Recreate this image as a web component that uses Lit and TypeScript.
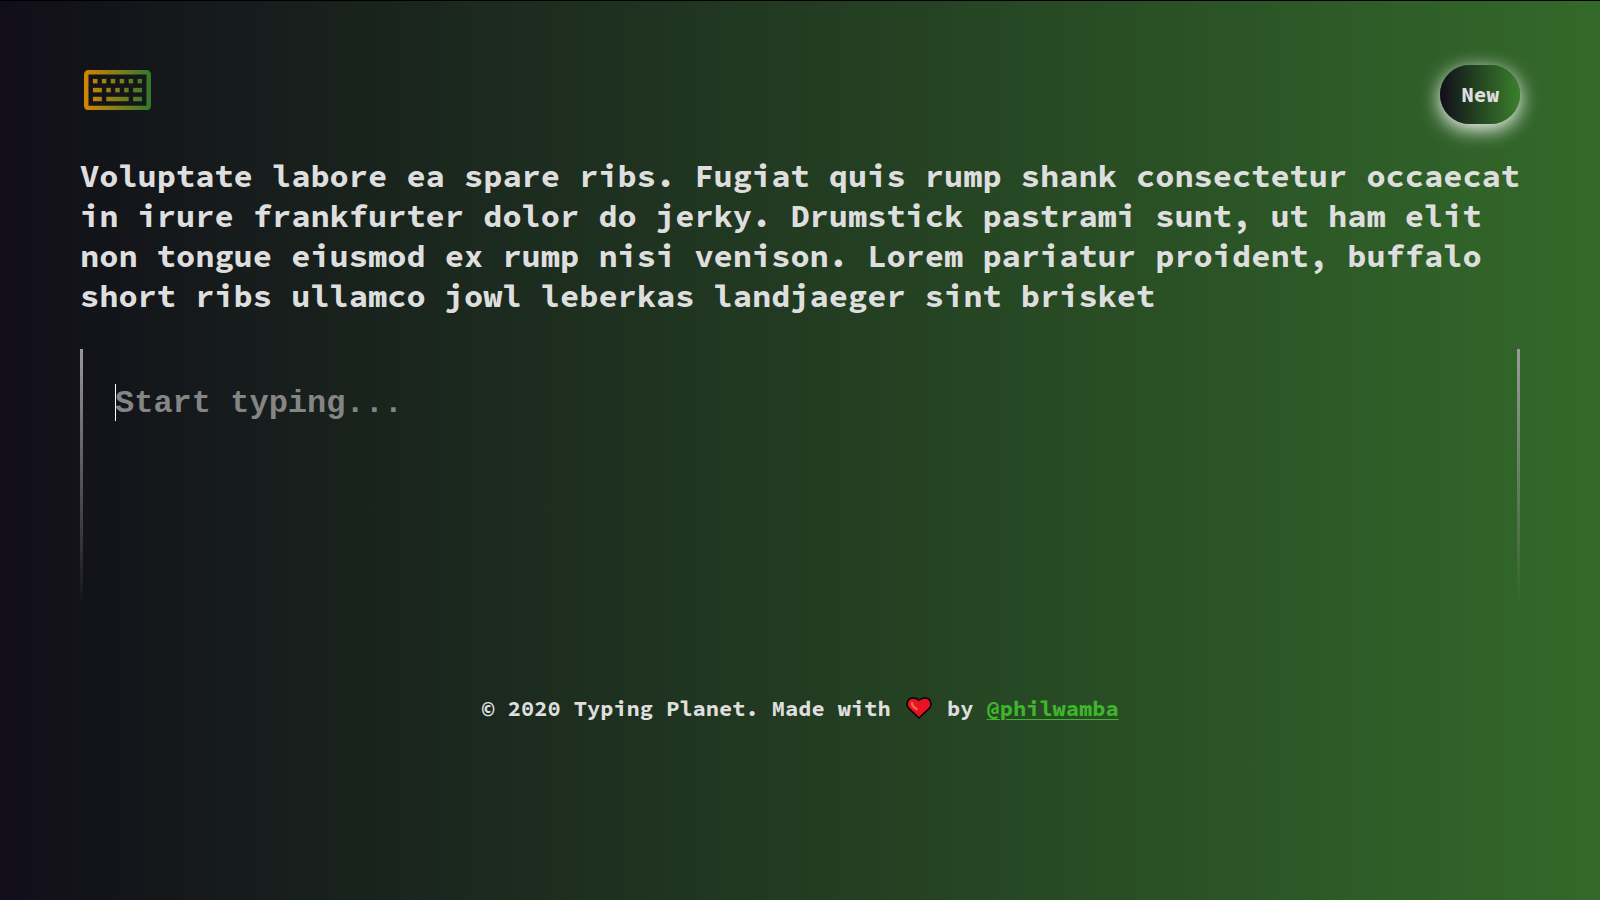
import { LitElement, html, css, svg } from "lit";
import { customElement, state } from "lit/decorators.js";

const KEYS: Array<[number, number, number]> = [
  [2, 2, 1], [4, 2, 1], [6, 2, 1], [8, 2, 1], [10, 2, 1], [12, 2, 1],
  [2, 4, 2], [5, 4, 1], [7, 4, 1], [9, 4, 1], [11, 4, 2],
  [2, 6, 2], [5, 6, 5], [11, 6, 2],
];

const PASSAGE =
  "Voluptate labore ea spare ribs. Fugiat quis rump shank consectetur occaecat in irure frankfurter dolor do jerky. Drumstick pastrami sunt, ut ham elit non tongue eiusmod ex rump nisi venison. Lorem pariatur proident, buffalo short ribs ullamco jowl leberkas landjaeger sint brisket";

@customElement("app-root")
export class AppRoot extends LitElement {
  @state() private typed = "";

  static styles = css`
    :host {
      display: block;
      min-height: 100vh;
      box-sizing: border-box;
      padding: 64px 5%;
      border-top: 1px solid #000;
      color: #dedede;
      background: linear-gradient(to right, #110e19, #33692a);
      font-family: "Source Code Pro", "Noto Sans Mono CJK SC", "DejaVu Sans Mono", monospace;
      font-weight: 700;
    }
    .header {
      display: flex;
      justify-content: space-between;
      align-items: flex-start;
    }
    .logo {
      display: block;
      width: 67px;
      margin: 5px 4px;
    }
    .new {
      padding: 16px 21px;
      border: 0;
      border-radius: 32px;
      color: inherit;
      font: inherit;
      font-size: 21px;
      line-height: 27px;
      background: linear-gradient(to right, #110e19, #3a802c);
      box-shadow: 0 5px 20px #fff;
      cursor: pointer;
    }
    .passage {
      margin: 32px 0 33px;
      font-size: 32px;
      line-height: 40px;
    }
    .entry {
      position: relative;
    }
    .input {
      display: block;
      width: 100%;
      height: 256px;
      box-sizing: border-box;
      padding: 35px 32px;
      border: 3px solid transparent;
      border-image: linear-gradient(to bottom, #9a9a9a, transparent) 1;
      border-width: 0 3px;
      outline: 0;
      resize: none;
      color: inherit;
      background: none;
      font: 700 32px/40px "Courier New", "Liberation Mono", monospace;
    }
    .input::placeholder {
      color: #858585;
      opacity: 1;
    }
    .caret {
      position: absolute;
      left: 35px;
      top: 35px;
      width: 1px;
      height: 37px;
      background: #fff;
    }
    .footer {
      margin-top: 87px;
      text-align: center;
      font-size: 22px;
      line-height: 32px;
    }
    .heart {
      width: 26px;
      height: 24px;
      margin: 0 2px;
      vertical-align: -4px;
    }
    .link {
      color: #3fb52c;
      text-decoration-thickness: 1px;
      text-underline-offset: 3px;
    }
  `;

  render() {
    return html`
      <header class="header">
        <svg class="logo" viewBox="0 0 15 9" role="img" aria-label="Typing Planet">
          <defs>
            <linearGradient id="ink" gradientUnits="userSpaceOnUse" x1="0" y1="0" x2="15" y2="0">
              <stop offset="0" stop-color="#d48600" />
              <stop offset="1" stop-color="#30792b" />
            </linearGradient>
          </defs>
          <rect x=".5" y=".5" width="14" height="8" rx=".5" fill="none" stroke="url(#ink)" />
          ${KEYS.map(([x, y, w]) => svg`<rect x=${x} y=${y} width=${w} height="1" fill="url(#ink)" />`)}
        </svg>
        <button class="new" type="button" @click=${() => (this.typed = "")}>New</button>
      </header>
      <main>
        <p class="passage">${PASSAGE}</p>
        <div class="entry">
          <textarea
            class="input"
            aria-label="Typing area"
            placeholder="Start typing..."
            .value=${this.typed}
            @input=${(e: Event) => (this.typed = (e.target as HTMLTextAreaElement).value)}
          ></textarea>
          ${this.typed ? "" : html`<span class="caret"></span>`}
        </div>
      </main>
      <footer class="footer">
        © 2020 Typing Planet. Made with
        <svg class="heart" viewBox="0 0 26 24" role="img" aria-label="love">
          <path d="M13 22 2.500 12C-.5 8.500 1.500 2 7 2c3 0 5 1 6 2.500 1-1.500 3-2.500 6-2.500 5.500 0 7.500 6.500 4.500 10Z" fill="#e81224" stroke="#000" stroke-width="1.500" stroke-linejoin="round" />
          <path d="M6 7c0 2 2 4.500 4.500 6" fill="none" stroke="#f4664a" stroke-width="2.500" stroke-linecap="round" />
        </svg>
        by <a class="link" href="#philwamba">@philwamba</a>
      </footer>
    `;
  }
}
